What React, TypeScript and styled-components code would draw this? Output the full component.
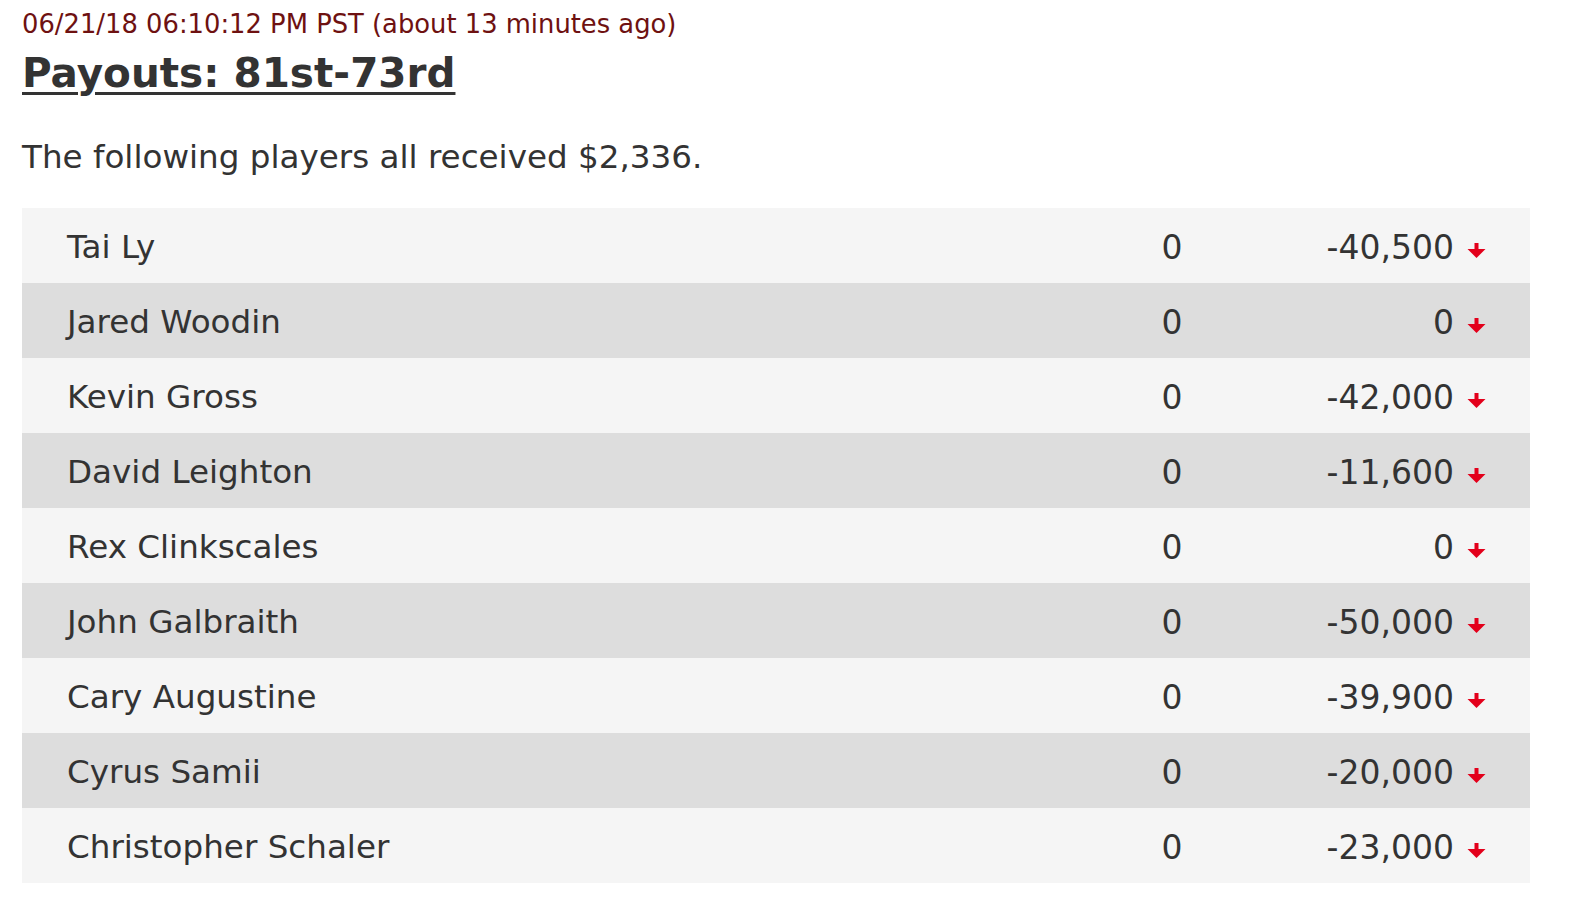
import styled, { createGlobalStyle } from 'styled-components';

const GlobalStyle = createGlobalStyle`
  html, body {
    margin: 0;
    padding: 0;
    background: #ffffff;
  }
  body {
    font-family: 'DejaVu Sans', Verdana, sans-serif;
    color: #333333;
  }
`;

const players = [
  { name: 'Tai Ly', points: 0, change: '-40,500' },
  { name: 'Jared Woodin', points: 0, change: '0' },
  { name: 'Kevin Gross', points: 0, change: '-42,000' },
  { name: 'David Leighton', points: 0, change: '-11,600' },
  { name: 'Rex Clinkscales', points: 0, change: '0' },
  { name: 'John Galbraith', points: 0, change: '-50,000' },
  { name: 'Cary Augustine', points: 0, change: '-39,900' },
  { name: 'Cyrus Samii', points: 0, change: '-20,000' },
  { name: 'Christopher Schaler', points: 0, change: '-23,000' },
];

const DownArrow = () => (
  <svg width='19' height='15' viewBox='0 0 19 15'>
    <rect x='7.5' y='0' width='4' height='7' fill='#e3001b' />
    <polygon points='0.5,6 18.5,6 9.5,15' fill='#e3001b' />
  </svg>
);

const App = () => {
  return (
    <>
      <GlobalStyle />
      <Page>
        <Stamp>06/21/18 06:10:12 PM PST (about 13 minutes ago)</Stamp>
        <Title>Payouts: 81st-73rd</Title>
        <Intro>The following players all received $2,336.</Intro>
        <Table>
          {players.map((p, index) => (
            <Row key={p.name} $shade={index % 2 === 1}>
              <Name>{p.name}</Name>
              <Points>{p.points}</Points>
              <Change>{p.change}</Change>
              <Trend>
                <DownArrow />
              </Trend>
            </Row>
          ))}
        </Table>
      </Page>
    </>
  );
};

const Page = styled.div`
  padding: 9px 49px 30px 22px;
`;

const Stamp = styled.div`
  font-size: 25.8px;
  line-height: 30px;
  color: #6e1111;
`;

const Title = styled.h2`
  margin: 10px 0 0;
  font-weight: 700;
  font-size: 40.5px;
  line-height: 48px;
  text-decoration: underline;
  text-decoration-thickness: 3px;
  text-underline-offset: 5px;
  color: #333333;
`;

const Intro = styled.p`
  margin: 40px 0 31px;
  font-size: 32.6px;
  line-height: 40px;
`;

const Table = styled.div`
  display: flex;
  flex-direction: column;
`;

const Row = styled.div<{ $shade: boolean }>`
  display: grid;
  grid-template-columns: 1fr 80px 242px 32px;
  align-items: center;
  height: 75px;
  box-sizing: border-box;
  padding: 3px 44px 0 45px;
  background-color: ${(p) => (p.$shade ? '#dddddd' : '#f5f5f5')};
  font-size: 33px;
`;

const Name = styled.span`
  font-size: 32.6px;
`;

const Points = styled.span`
  text-align: center;
`;

const Change = styled.span`
  text-align: right;
`;

const Trend = styled.span`
  display: flex;
  justify-content: flex-end;
  align-items: center;
  padding-top: 6px;
`;

export default App;
